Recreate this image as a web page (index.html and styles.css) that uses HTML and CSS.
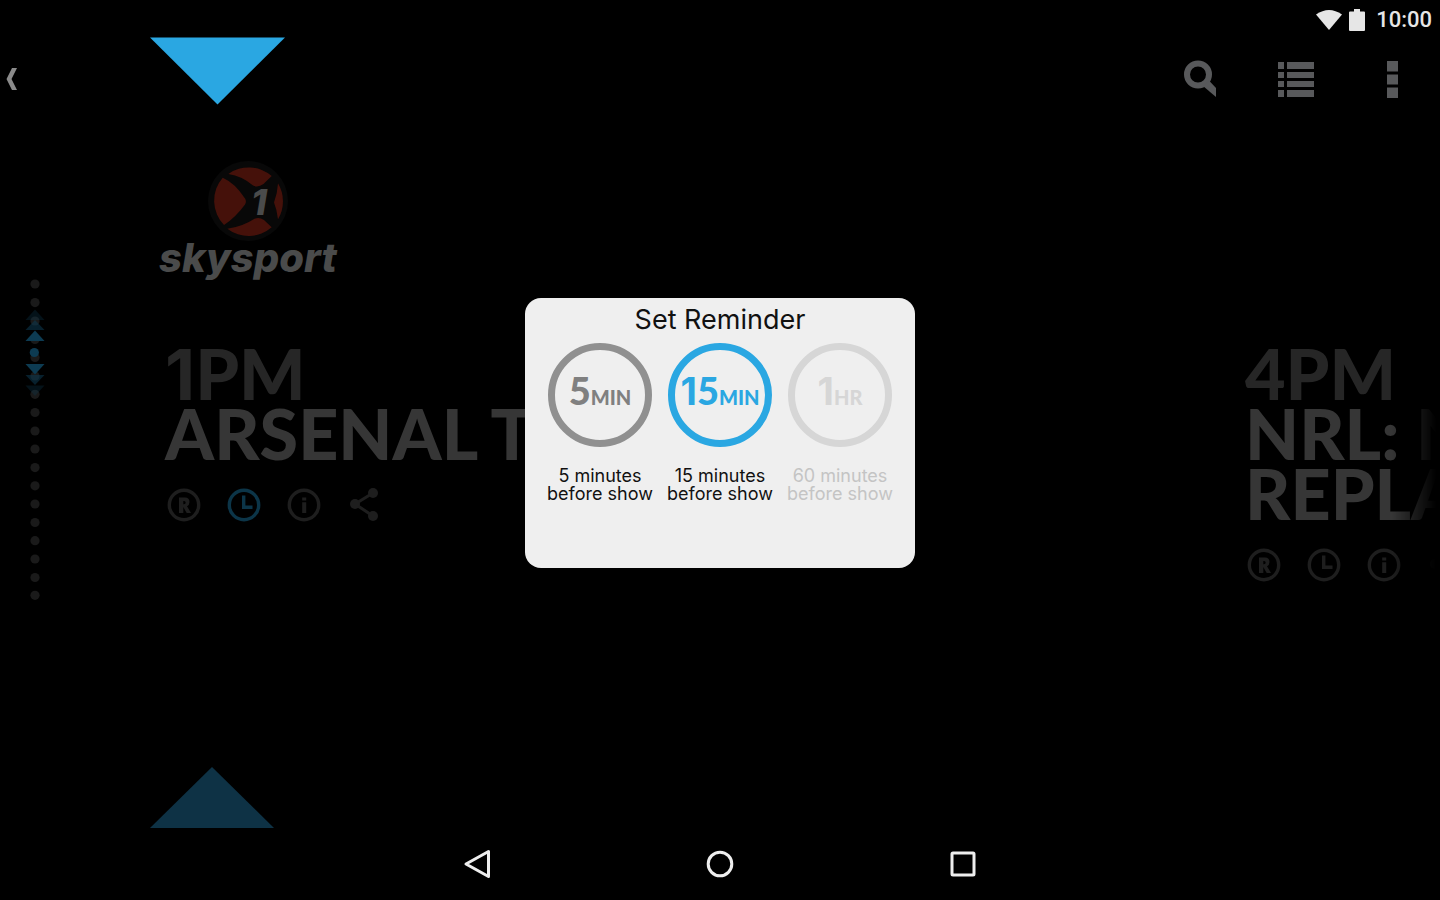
FILE: index.html
```html
<!DOCTYPE html>
<html lang="en">
<head>
<meta charset="utf-8">
<meta name="viewport" content="width=device-width, initial-scale=1">
<title>Set Reminder</title>
<link rel="stylesheet" href="styles.css">
</head>
<body>
<svg class="defs" aria-hidden="true">
  <symbol id="ring" viewBox="0 0 34 34"><circle cx="17" cy="17" r="14.700" fill="none" stroke="currentColor" stroke-width="3.400"/></symbol>
  <symbol id="record" viewBox="0 0 34 34"><use href="#ring"/><path fill-rule="evenodd" d="M12 9.500H18Q22.500 9.500 22.500 14Q22.500 17 20 18.200L24 25H19.700L16.300 19V25H12ZM16.300 13V16.200H17Q18.700 16.200 18.700 14.600Q18.700 13 17 13Z" fill="currentColor"/></symbol>
  <symbol id="clock" viewBox="0 0 34 34"><use href="#ring"/><path d="M16.700 7.500V19.300H25.500" fill="none" stroke="currentColor" stroke-width="3.400"/></symbol>
  <symbol id="info" viewBox="0 0 34 34"><use href="#ring"/><path d="M15.200 9.500h4v3h-4zM15.200 14.300h4V25h-4z" fill="currentColor"/></symbol>
  <symbol id="share" viewBox="0 0 34 34"><path d="M26 5L8 16L26 28" fill="none" stroke="currentColor" stroke-width="3"/><circle cx="8" cy="16" r="5" fill="currentColor"/><circle cx="26" cy="5" r="5" fill="currentColor"/><circle cx="26" cy="28" r="5" fill="currentColor"/></symbol>
</svg>

<div class="status">
  <svg width="26" height="22" viewBox="0 0 26 22" aria-hidden="true"><path d="M13 21L0 5.500Q13-3.500 26 5.500Z" fill="#e6e6e6"/></svg>
  <svg width="16" height="22" viewBox="0 0 16 22" aria-hidden="true"><path d="M5 0h6v2.500h4a1 1 0 0 1 1 1V21a1 1 0 0 1-1 1H1a1 1 0 0 1-1-1V3.500a1 1 0 0 1 1-1h4z" fill="#e6e6e6"/></svg>
  <time>10:00</time>
</div>

<header class="bar">
  <button class="back" aria-label="Back"><svg width="12" height="22" viewBox="0 0 12 22"><path d="M.5 11L6 0h5L5.500 11L11 22H6z" fill="#8a8a8a"/></svg></button>
  <button class="page-up" aria-label="Previous channel"><svg width="135" height="68" viewBox="0 0 135 68"><path d="M0 .5H135L67.500 67.500z" fill="#2aa7e2"/></svg></button>
  <div class="actions">
    <button aria-label="Search"><svg width="34" height="38" viewBox="0 0 34 38"><circle cx="15" cy="14.500" r="11" fill="none" stroke="currentColor" stroke-width="6"/><path d="M20 26L26 20.500L33 28V37z" fill="currentColor"/></svg></button>
    <button aria-label="List"><svg width="36" height="36" viewBox="0 0 36 36"><path d="M0 1h6v7H0zM9 1h27v7H9zM0 11h6v6H0zM9 11h27v6H9zM0 20h6v6H0zM9 20h27v6H9zM0 29h6v7H0zM9 29h27v7H9z" fill="currentColor"/></svg></button>
    <button aria-label="More"><svg width="12" height="37" viewBox="0 0 12 37"><path d="M1 0h11v10.500H1zM1 13.500h11v10H1zM1 26.500h11V37H1z" fill="currentColor"/></svg></button>
  </div>
</header>

<main class="guide">
  <nav class="rail" aria-label="Channels">
    <svg width="20" height="322" viewBox="0 0 20 322">
      <g fill="#1a1a1a"><circle cx="10" cy="6" r="4.600"/><circle cx="10" cy="24.600" r="4.600"/><circle cx="10" cy="43" r="4.600"/><circle cx="10" cy="61.500" r="4.600"/><circle cx="10" cy="79.500" r="4.600"/><circle cx="10" cy="98" r="4.600"/><circle cx="10" cy="116.300" r="4.600"/><circle cx="10" cy="134.500" r="4.600"/><circle cx="10" cy="153" r="4.600"/><circle cx="10" cy="171" r="4.600"/><circle cx="10" cy="189.600" r="4.600"/><circle cx="10" cy="207.800" r="4.600"/><circle cx="10" cy="226" r="4.600"/><circle cx="10" cy="244.500" r="4.600"/><circle cx="10" cy="262.700" r="4.600"/><circle cx="10" cy="281" r="4.600"/><circle cx="10" cy="299.500" r="4.600"/><circle cx="10" cy="317.300" r="4.600"/></g>
      <g fill="#0d3b52"><path d="M.5 42L10 31.500L19.500 42z" opacity=".3"/><path d="M.5 52L10 42L19.500 52z" opacity=".55"/><path d="M.5 63L10 52.500L19.500 63z"/><circle cx="9.300" cy="74.500" r="4.600"/><path d="M.5 86L10 96.500L19.500 86z"/><path d="M.5 97L10 107L19.500 97z" opacity=".55"/><path d="M.5 107.500L10 118L19.500 107.500z" opacity=".3"/></g>
    </svg>
  </nav>

  <div class="channel">
    <svg class="logo" viewBox="0 0 180 120" role="img" aria-label="Sky Sport 1">
      <g transform="translate(50 1)">
        <circle cx="40" cy="40" r="40" fill="#080808"/>
        <g fill="#45110a">
          <path d="M14.700 16.700A35 35 0 0 0 16 64Q28 56 37 43.500Q38.800 40.700 37 37.500Q27 22 14.700 16.700Z"/>
          <path d="M20.300 13A35 35 0 0 1 63.700 15L55.500 23Q50 27 45 24.500Q34 15 20.300 13Z"/>
          <path d="M19.300 67.700A35 35 0 0 0 63.700 66.300L56 59Q51 55.500 46.500 57.800Q34 66 19.300 67.700Z"/>
          <path d="M70 22.300A35 35 0 0 1 70 58.300Q69 49 66 41.500Q69.500 32 70 22.300Z"/>
        </g>
        <text class="logo-number" x="43" y="54">1</text>
      </g>
      <text class="logo-name" x="1" y="112">skysport</text>
    </svg>

    <div class="programmes">
      <article class="programme">
        <h2><time><span class="one">1</span>PM</time>ARSENAL T</h2>
        <div class="tools">
          <button aria-label="Record"><svg><use href="#record"/></svg></button>
          <button class="active" aria-label="Reminder"><svg><use href="#clock"/></svg></button>
          <button aria-label="Info"><svg><use href="#info"/></svg></button>
          <button aria-label="Share"><svg><use href="#share"/></svg></button>
        </div>
      </article>
      <article class="programme">
        <h2><time>4PM</time>NRL: N<br>REPLA</h2>
        <div class="tools">
          <button aria-label="Record"><svg><use href="#record"/></svg></button>
          <button aria-label="Reminder"><svg><use href="#clock"/></svg></button>
          <button aria-label="Info"><svg><use href="#info"/></svg></button>
          <button aria-label="Share"><svg><use href="#share"/></svg></button>
        </div>
      </article>
    </div>

    <button class="page-down" aria-label="Next channel"><svg width="124" height="61" viewBox="0 0 124 61"><path d="M0 61L62 0L124 61z" fill="#0e3245"/></svg></button>
  </div>
</main>

<nav class="system" aria-label="System">
  <button aria-label="Back"><svg width="28" height="30" viewBox="0 0 28 30"><path d="M3 15L25.500 2.500V27.500Z" fill="none" stroke="currentColor" stroke-width="3" stroke-linejoin="round"/></svg></button>
  <button aria-label="Home"><svg width="28" height="28" viewBox="0 0 28 28"><circle cx="14" cy="14" r="11.800" fill="none" stroke="currentColor" stroke-width="3"/></svg></button>
  <button aria-label="Overview"><svg width="28" height="28" viewBox="0 0 28 28"><rect x="3" y="3" width="22" height="22" rx="1" fill="none" stroke="currentColor" stroke-width="3"/></svg></button>
</nav>

<div class="overlay">
  <section class="dialog" role="dialog" aria-modal="true" aria-labelledby="dialog-title">
    <h1 id="dialog-title">Set Reminder</h1>
    <div class="options">
      <button class="option">
        <span class="dial"><span class="amount">5</span>MIN</span>
        <span class="caption">5 minutes<br>before show</span>
      </button>
      <button class="option selected">
        <span class="dial"><span class="amount"><span class="one">1</span>5</span>MIN</span>
        <span class="caption">15 minutes<br>before show</span>
      </button>
      <button class="option" disabled>
        <span class="dial"><span class="amount"><span class="one">1</span></span>HR</span>
        <span class="caption">60 minutes<br>before show</span>
      </button>
    </div>
  </section>
</div>
</body>
</html>
```
FILE: styles.css
```css
* { box-sizing: border-box; }

body {
  margin: 0;
  min-height: 100vh;
  display: flex;
  flex-direction: column;
  position: relative;
  overflow-x: hidden;
  background: #000;
  color: #363636;
  font-family: Inter, "Liberation Sans", sans-serif;
}

button {
  margin: 0;
  padding: 0;
  border: 0;
  background: none;
  color: inherit;
  font: inherit;
  cursor: pointer;
}

svg { display: block; }

.defs {
  position: absolute;
  width: 0;
  height: 0;
}

/* Status bar */
.status {
  display: flex;
  justify-content: flex-end;
  align-items: center;
  gap: 7px;
  height: 37px;
  padding: 3px 8px 0 0;
  color: #e6e6e6;
  font: 500 22px/30px Roboto, sans-serif;
}

.status time { margin-left: 4px; }

/* App bar */
.bar {
  display: flex;
  align-items: flex-start;
  min-height: 84px;
}

.back {
  width: 150px;
  padding: 31px 6px;
}

.actions {
  display: flex;
  margin-left: auto;
  color: #58595b;
}

.actions button {
  display: grid;
  place-items: center;
  width: 96px;
  height: 84px;
}

/* Guide */
.guide {
  flex: 1;
  display: grid;
  grid-template-columns: 69px 1fr;
}

.rail {
  display: flex;
  justify-content: center;
  padding-top: 157px;
}

.channel {
  display: flex;
  flex-direction: column;
  align-items: flex-start;
  min-width: 0;
  padding: 39px 0 0 81px;
}

.logo {
  width: 180px;
  height: 120px;
  margin-left: 8px;
  fill: #4a4b4b;
}

.logo-number {
  font: italic 800 36px Inter, sans-serif;
}

.logo-name {
  font: italic 800 40px Inter, sans-serif;
}

.programmes {
  display: flex;
  width: 100%;
  overflow: hidden;
  margin-top: 43px;
  padding: 20px 0 0 15px;
  -webkit-mask-image: linear-gradient(to left, transparent 4px, #000 48px);
  mask-image: linear-gradient(to left, transparent 4px, #000 48px);
}

.programme {
  flex: 0 0 75vw;
  white-space: nowrap;
}

h2 {
  margin: 0;
  font: 900 70px/60px Lato, sans-serif;
}

h2 time {
  display: block;
  color: #262626;
}

.one {
  font-family: Inter, sans-serif;
  font-weight: 700;
  line-height: 1px;
}

.tools {
  display: flex;
  gap: 26px;
  margin: 25px 0 0 2px;
  color: #1e1e1e;
}

.tools svg {
  width: 34px;
  height: 34px;
  overflow: visible;
}

.tools .active { color: #0c3548; }

.page-down { margin-top: auto; }

/* System navigation */
.system {
  display: flex;
  justify-content: center;
  color: #eee;
}

.system button {
  display: grid;
  place-items: center;
  width: 243px;
  height: 72px;
}

/* Reminder dialog */
.overlay {
  position: absolute;
  inset: 0;
  display: grid;
  place-items: center;
  padding-bottom: 34px;
}

.dialog {
  width: 390px;
  max-width: 100%;
  min-height: 270px;
  padding: 6px 15px;
  border-radius: 16px;
  background: #efefef;
  color: #111;
}

h1 {
  margin: 0;
  text-align: center;
  font-size: 27px;
  font-weight: 400;
  line-height: 32px;
}

.options {
  display: grid;
  grid-template-columns: repeat(3, 1fr);
  margin-top: 7px;
}

.option {
  display: flex;
  flex-direction: column;
  align-items: center;
  gap: 20px;
}

.dial {
  display: flex;
  justify-content: center;
  align-items: baseline;
  width: 104px;
  height: 104px;
  border: 7px solid #909090;
  border-radius: 50%;
  color: #808080;
  font: 900 20px/80px Lato, sans-serif;
}

.amount {
  font-size: 38px;
}

.caption {
  font-size: 18px;
  line-height: 18px;
  white-space: nowrap;
}

.selected .dial {
  border-color: #2aa7e2;
  color: #2aa7e2;
}

.option:disabled {
  color: #c4c4c4;
  cursor: default;
}

.option:disabled .dial {
  border-color: #d6d6d6;
  color: #d6d6d6;
}
```
